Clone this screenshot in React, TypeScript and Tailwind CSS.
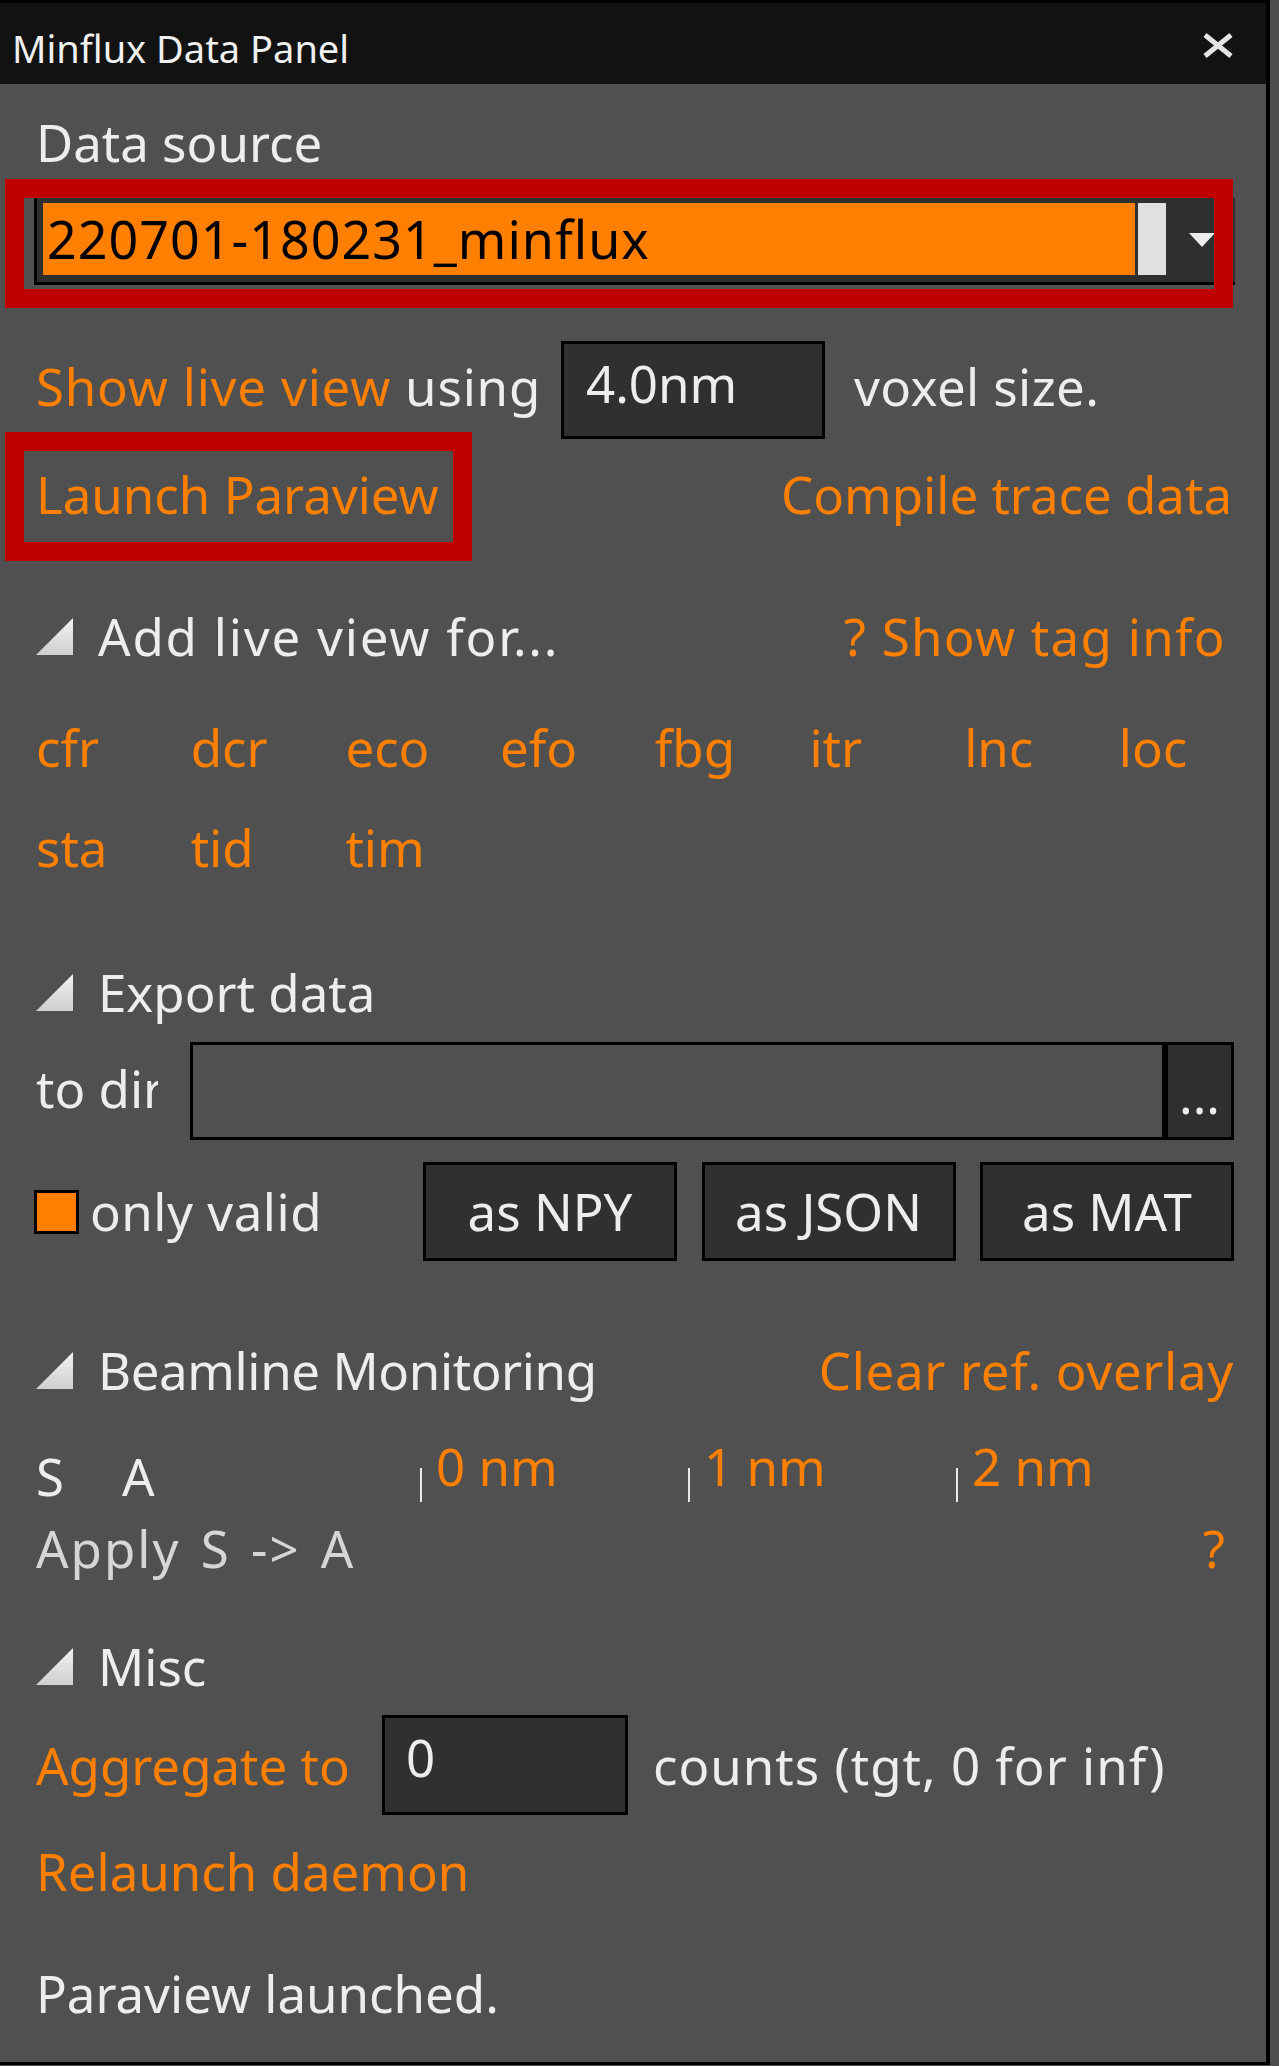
import React from 'react'

const orange = 'text-[#ff8000]'
const light = 'text-[#ededed]'

const tags = ['cfr', 'dcr', 'eco', 'efo', 'fbg', 'itr', 'lnc', 'loc', 'sta', 'tid', 'tim']

function Triangle() {
  return (
    <svg width="37" height="37" viewBox="0 0 37 37" className="flex-shrink-0">
      <defs>
        <linearGradient id="tri" x1="0" y1="0" x2="0" y2="1">
          <stop offset="0" stopColor="#f2f2f2" />
          <stop offset="1" stopColor="#cfcfcf" />
        </linearGradient>
      </defs>
      <polygon points="0,37 37,0 37,37" fill="url(#tri)" />
    </svg>
  )
}

function SectionHeader({ title, titleClass = '', right, rightClass = '' }: { title: string; titleClass?: string; right?: string; rightClass?: string }) {
  return (
    <div className="h-full flex items-center justify-between">
      <div className="flex items-center">
        <Triangle />
        <span className={`ml-[25px] ${light} ${titleClass}`}>{title}</span>
      </div>
      {right && <span className={`${orange} ${rightClass}`}>{right}</span>}
    </div>
  )
}

function CloseIcon() {
  return (
    <svg width="32" height="25" viewBox="0 0 32 25" className="mt-[30px]">
      <path d="M3 2 L29 23 M29 2 L3 23" stroke="#e4e4e4" strokeWidth="5" strokeLinecap="butt" />
    </svg>
  )
}

function RedBox({ className }: { className: string }) {
  return <div className={`absolute border-[19px] border-[#c00000] pointer-events-none ${className}`} />
}

export default function App() {
  return (
    <div
      className="w-[1279px] h-[2066px] bg-[#4e4e4e] overflow-hidden text-[51px] leading-none"
      style={{ fontFamily: '"Noto Sans", "DejaVu Sans", sans-serif' }}
    >
      <div className="w-[1270px] h-[2065px] bg-[#505050] border-r-4 border-b-[3px] border-black flex flex-col">
        {/* title bar */}
        <div className="h-[84px] flex-shrink-0 bg-[#121212] border-t-[3px] border-black flex items-start justify-between pl-[12px] pr-[32px]">
          <span className="text-[38px] text-[#f0f0f0] mt-[26px]">Minflux Data Panel</span>
          <CloseIcon />
        </div>

        <div className="flex flex-col pl-[36px] pr-[32px] whitespace-nowrap">
          {/* data source */}
          <div className={`h-[114px] flex items-center pt-[3px] ${light}`}>Data source</div>

          <div className="relative h-[87px] -ml-[2px] -mr-[1px]">
            <div className="h-full flex items-start border-l-[3px] border-b-[3px] border-black bg-[#2f2f2f] pl-[6px] pt-[5px]">
              <div className="w-[1092px] h-[72px] bg-[#ff8000] flex items-center pl-[4px] text-black text-[52px] tracking-[1px]">
                220701-180231_minflux
              </div>
              <div className="w-[28px] h-[72px] bg-[#e0e0e0] ml-[3px]" />
              <svg width="26" height="14" viewBox="0 0 26 14" className="ml-[23px] mt-[30px]">
                <polygon points="0,0 26,0 13,14" fill="#ececec" />
              </svg>
            </div>
            <RedBox className="-left-[29px] -top-[19px] w-[1228px] h-[129px]" />
          </div>

          {/* live view */}
          <div className="mt-[56px] h-[98px] flex items-center">
            <div className="w-[525px] mb-[8px] tracking-[0.8px]">
              <span className={orange}>Show live view</span>
              <span className={light}> using</span>
            </div>
            <div className={`w-[264px] h-full border-[3px] border-black bg-[#303030] pl-[22px] pt-[14px] ${light}`}>4.0nm</div>
            <span className={`ml-[29px] mb-[8px] tracking-[0.4px] ${light}`}>voxel size.</span>
          </div>

          <div className="relative h-[111px] flex items-center justify-between">
            <span className={orange}>Launch Paraview</span>
            <span className={`${orange} mr-[2px]`}>Compile trace data</span>
            <RedBox className="-left-[31px] -top-[7px] w-[467px] h-[129px]" />
          </div>

          {/* tags */}
          <div className="mt-[50px] h-[72px]">
            <SectionHeader
              title="Add live view for..."
              titleClass="tracking-[1.8px]"
              right="? Show tag info"
              rightClass="mr-[8px] tracking-[1.3px]"
            />
          </div>
          <div className="mt-[25px] grid grid-cols-[repeat(8,154.7px)] auto-rows-[100px]">
            {tags.map((t) => (
              <div key={t} className={`flex items-center ${orange}`}>{t}</div>
            ))}
          </div>

          {/* export */}
          <div className="mt-[59px] h-[72px]">
            <SectionHeader title="Export data" />
          </div>
          <div className="mt-[14px] h-[98px] flex items-center">
            <div className={`w-[122px] overflow-hidden mb-[6px] ${light}`}>to dir</div>
            <div className="ml-[32px] flex-1 h-full flex border-[3px] border-black bg-[#505050]">
              <div className="flex-1" />
              <div className={`w-[69px] border-l-[6px] border-black bg-[#2f2f2f] flex items-center justify-center pt-[6px] ${light}`}>...</div>
            </div>
          </div>
          <div className="mt-[22px] h-[99px] flex items-center">
            <div className="w-[45px] h-[44px] -ml-[2px] border-[3px] border-black bg-[#ff8000]" />
            <span className={`ml-[11px] tracking-[0.5px] ${light}`}>only valid</span>
            <div className="ml-auto h-full flex gap-[24.5px]">
              {['as NPY', 'as JSON', 'as MAT'].map((b) => (
                <div key={b} className={`w-[254px] h-full border-[3px] border-black bg-[#303030] flex items-center justify-center ${light}`}>
                  {b}
                </div>
              ))}
            </div>
          </div>

          {/* beamline */}
          <div className="mt-[74px] h-[71px]">
            <SectionHeader
              title="Beamline Monitoring"
              titleClass="tracking-[-0.4px]"
              right="Clear ref. overlay"
              rightClass="tracking-[0.7px]"
            />
          </div>
          <div className="mt-[37px] h-[70px] flex items-start">
            <span className={`w-[86px] mt-[8px] ${light}`}>S</span>
            <span className={`w-[298px] mt-[8px] ${light}`}>A</span>
            {['0 nm', '1 nm', '2 nm'].map((l) => (
              <div key={l} className="w-[268px] flex items-start">
                <div className="w-[2px] h-[34px] mt-[25px] bg-[#e8e8e8]" />
                <span className={`ml-[14px] -mt-[2px] ${orange}`}>{l}</span>
              </div>
            ))}
          </div>
          <div className="h-[71px] flex items-center justify-between">
            <span className="text-[#d6d6d6] tracking-[2px] [word-spacing:5px]">Apply S -&gt; A</span>
            <span className={`${orange} mr-[9px]`}>?</span>
          </div>

          {/* misc */}
          <div className="mt-[47px] h-[70px]">
            <SectionHeader title="Misc" />
          </div>
          <div className="mt-[14px] h-[100px] flex items-center">
            <span className={`w-[346px] ${orange}`}>Aggregate to</span>
            <div className={`w-[246px] h-full border-[3px] border-black bg-[#303030] pl-[21px] pt-[14px] ${light}`}>0</div>
            <span className={`ml-[25px] tracking-[1px] ${light}`}>counts (tgt, 0 for inf)</span>
          </div>
          <div className={`h-[112px] flex items-center ${orange}`}>Relaunch daemon</div>
          <div className={`mt-[31px] h-[71px] flex items-center ${light}`}>Paraview launched.</div>
        </div>
      </div>
    </div>
  )
}
